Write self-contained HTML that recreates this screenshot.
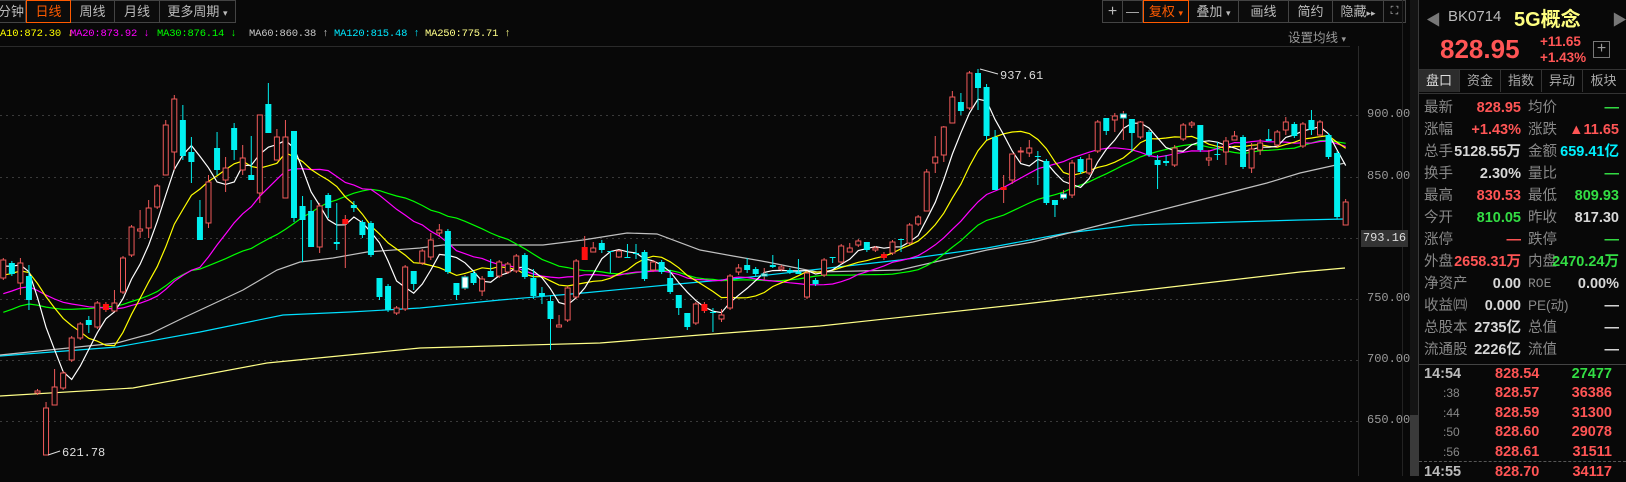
<!DOCTYPE html>
<html><head><meta charset="utf-8">
<style>
*{margin:0;padding:0;box-sizing:border-box}
body{width:1626px;height:476px;background:#080808;overflow:hidden;position:relative;font-family:"Liberation Sans","Noto Sans CJK SC",sans-serif;color:#ccc}
.abs{position:absolute}
.tb{position:absolute;top:0;height:23px;border:1px solid #444;border-left:none;font-size:13px;line-height:21px;text-align:center;color:#bbb;background:#0c0c0c;white-space:nowrap;overflow:hidden}
.leg{position:absolute;top:28px;font-family:"Liberation Mono",monospace;font-size:10.5px;letter-spacing:-0.2px;white-space:nowrap}
.ax{position:absolute;left:1367px;font-family:"Liberation Mono",monospace;font-size:12px;color:#999}
.pr{position:absolute;left:1418px;width:208px;height:22px;font-size:14.5px;line-height:22px}
.pr span{position:absolute}
.l1{left:6px;color:#888}
.v1{right:105px;font-weight:bold}
.l2{left:110px;color:#888}
.v2{right:7px;font-weight:bold}
.tr{position:absolute;left:1418px;width:208px;height:20px;font-size:14.5px;line-height:20px;font-weight:bold}
.tr span{position:absolute}
.red{color:#ff5555}.grn{color:#33dd44}.cy{color:#00f0ff}.wh{color:#d8d8d8}
.tab{position:absolute;top:70px;height:22px;width:41px;font-size:13px;line-height:22px;text-align:center;color:#aaa;border-right:1px solid #333}
</style></head><body>

<!-- left toolbar -->
<div class="tb" style="left:-1px;width:27px;border-left:1px solid #444;text-align:right;padding-right:1px;direction:rtl">分钟</div>
<div class="tb" style="left:26px;width:45px;border:1px solid #ff5a00;color:#ff5a00">日线</div>
<div class="tb" style="left:71px;width:44px">周线</div>
<div class="tb" style="left:115px;width:45px">月线</div>
<div class="tb" style="left:160px;width:76px">更多周期 <span style="font-size:9px">▾</span></div>

<!-- right toolbar -->
<div class="tb" style="left:1102px;width:21px;border-left:1px solid #444;font-size:16px">+</div>
<div class="tb" style="left:1123px;width:20px">—</div>
<div class="tb" style="left:1143px;width:46px;border:1px solid #ff5a00;color:#ff5a00">复权 <span style="font-size:9px">▾</span></div>
<div class="tb" style="left:1189px;width:50px">叠加 <span style="font-size:9px">▾</span></div>
<div class="tb" style="left:1239px;width:50px">画线</div>
<div class="tb" style="left:1289px;width:44px">简约</div>
<div class="tb" style="left:1333px;width:51px">隐藏<span style="font-size:9px">▸▸</span></div>
<div class="tb" style="left:1384px;width:22px;font-size:11px">⛶</div>

<!-- legend -->
<div class="leg" style="left:0;color:#ffff00">A10:872.30 ↓</div>
<div class="leg" style="left:70px;color:#ff00ff">MA20:873.92 ↓</div>
<div class="leg" style="left:157px;color:#00ff00">MA30:876.14 ↓</div>
<div class="leg" style="left:249px;color:#c8c8c8">MA60:860.38 ↑</div>
<div class="leg" style="left:334px;color:#00e8ff">MA120:815.48 ↑</div>
<div class="leg" style="left:425px;color:#ffff88">MA250:775.71 ↑</div>
<div class="abs" style="left:1288px;top:27px;font-size:12.5px;color:#999">设置均线 <span style="font-size:9px">▾</span></div>
<div class="abs" style="left:0;top:46px;width:1350px;height:1px;background:#2a2a2a"></div>
<div class="abs" style="left:1358px;top:46px;width:1px;height:430px;background:#2a2a2a"></div>
<div class="abs" style="left:1402px;top:0;width:1px;height:476px;background:#222"></div>

<svg class="abs" style="left:0;top:0" width="1360" height="476" id="ch"></svg>

<!-- axis -->
<div class="ax" style="top:107px">900.00</div>
<div class="ax" style="top:169px">850.00</div>
<div class="ax" style="top:291px">750.00</div>
<div class="ax" style="top:352px">700.00</div>
<div class="ax" style="top:413px">650.00</div>
<div class="abs" style="left:1361px;top:230px;width:47px;height:17px;background:#333;font-family:'Liberation Mono',monospace;font-size:12px;color:#ddd;line-height:17px;text-align:center">793.16</div>

<!-- scrollbar -->
<div class="abs" style="left:1410px;top:0;width:8px;height:476px;background:#141414"></div>
<div class="abs" style="left:1410px;top:415px;width:8px;height:61px;background:#3a3a3a"></div>

<!-- right panel -->
<div class="abs" style="left:1418px;top:0;width:1px;height:476px;background:#3a3a3a"></div>
<div class="abs" style="left:1426px;top:9px;font-size:15px;color:#777">◀</div>
<div class="abs" style="left:1612px;top:9px;font-size:15px;color:#777">▶</div>
<div class="abs" style="left:1448px;top:8px;font-size:15px;color:#bbb">BK0714</div>
<div class="abs" style="left:1514px;top:3px;font-size:20px;font-weight:bold;color:#ffff80">5G概念</div>
<div class="abs" style="left:1440px;top:34px;font-size:26px;font-weight:bold;color:#ff5555">828.95</div>
<div class="abs" style="left:1540px;top:34px;font-size:13.5px;font-weight:bold;color:#ff5555">+11.65</div>
<div class="abs" style="left:1540px;top:50px;font-size:13.5px;font-weight:bold;color:#ff5555">+1.43%</div>
<div class="abs" style="left:1593px;top:41px;width:17px;height:17px;border:1px solid #777;color:#999;font-size:16px;line-height:14px;text-align:center">+</div>

<div class="abs" style="left:1419px;top:69px;width:207px;height:1px;background:#333"></div>
<div class="tab" style="left:1419px;background:#2c2c2c;color:#ddd">盘口</div>
<div class="tab" style="left:1460px">资金</div>
<div class="tab" style="left:1501px">指数</div>
<div class="tab" style="left:1542px">异动</div>
<div class="tab" style="left:1583px;border:none">板块</div>
<div class="abs" style="left:1419px;top:93px;width:207px;height:1px;background:#333"></div>

<div class="pr" style="top:97px"><span class="l1">最新</span><span class="v1 red">828.95</span><span class="l2">均价</span><span class="v2 grn">—</span></div>
<div class="pr" style="top:119px"><span class="l1">涨幅</span><span class="v1 red">+1.43%</span><span class="l2">涨跌</span><span class="v2 red">▲11.65</span></div>
<div class="pr" style="top:141px"><span class="l1">总手</span><span class="v1 wh">5128.55万</span><span class="l2">金额</span><span class="v2 cy">659.41亿</span></div>
<div class="pr" style="top:163px"><span class="l1">换手</span><span class="v1 wh">2.30%</span><span class="l2">量比</span><span class="v2 grn">—</span></div>
<div class="pr" style="top:185px"><span class="l1">最高</span><span class="v1 red">830.53</span><span class="l2">最低</span><span class="v2 grn">809.93</span></div>
<div class="pr" style="top:207px"><span class="l1">今开</span><span class="v1 grn">810.05</span><span class="l2">昨收</span><span class="v2 wh">817.30</span></div>
<div class="pr" style="top:229px"><span class="l1">涨停</span><span class="v1 red">—</span><span class="l2">跌停</span><span class="v2 grn">—</span></div>
<div class="pr" style="top:251px"><span class="l1">外盘</span><span class="v1 red">2658.31万</span><span class="l2">内盘</span><span class="v2 grn">2470.24万</span></div>
<div class="pr" style="top:273px"><span class="l1">净资产</span><span class="v1 wh">0.00</span><span class="l2" style="font-family:'Liberation Mono',monospace;font-size:13px">ROE</span><span class="v2 wh">0.00%</span></div>
<div class="pr" style="top:295px"><span class="l1">收益㈣</span><span class="v1 wh">0.000</span><span class="l2" style="font-size:13.5px">PE(动)</span><span class="v2 wh">—</span></div>
<div class="pr" style="top:317px"><span class="l1">总股本</span><span class="v1 wh">2735亿</span><span class="l2">总值</span><span class="v2 wh">—</span></div>
<div class="pr" style="top:339px"><span class="l1">流通股</span><span class="v1 wh">2226亿</span><span class="l2">流值</span><span class="v2 wh">—</span></div>
<div class="abs" style="left:1419px;top:364px;width:207px;height:1px;background:#444"></div>

<div class="tr" style="top:364px"><span style="left:6px;color:#bbb">14:54</span><span class="red" style="left:77px">828.54</span><span class="grn" style="right:14px">27477</span></div>
<div class="tr" style="top:383px"><span style="left:25px;color:#888;font-weight:normal;font-size:12px">:38</span><span class="red" style="left:77px">828.57</span><span class="red" style="right:14px">36386</span></div>
<div class="tr" style="top:403px"><span style="left:25px;color:#888;font-weight:normal;font-size:12px">:44</span><span class="red" style="left:77px">828.59</span><span class="red" style="right:14px">31300</span></div>
<div class="tr" style="top:422px"><span style="left:25px;color:#888;font-weight:normal;font-size:12px">:50</span><span class="red" style="left:77px">828.60</span><span class="red" style="right:14px">29078</span></div>
<div class="tr" style="top:442px"><span style="left:25px;color:#888;font-weight:normal;font-size:12px">:56</span><span class="red" style="left:77px">828.61</span><span class="red" style="right:14px">31511</span></div>
<div class="abs" style="left:1419px;top:461px;width:207px;height:0;border-top:1px dashed #555"></div>
<div class="tr" style="top:462px"><span style="left:6px;color:#bbb">14:55</span><span class="red" style="left:77px">828.70</span><span class="red" style="right:14px">34117</span></div>

<script>
var D=[
['R',260,278],['C',263,274],['R',263,283,258,295],['C',276,300,265,310],['R',391,393],['R',408,455,402,455],['R',387,405,369,405],['R',373,388],['R',338,360],['R',324,338],
['C',320,325,316,333],['R',303,327],['F',304,310],['R',303,311,290,311],['R',258,292],['R',227,255],['R',229,231,210,238],['R',208,228,200,238],['R',186,207],['R',125,175,120,175],
['R',99,152,95,170],['C',120,156,105,160],['C',152,162,137,183],['C',217,240,200,240],['R',182,223,175,228],['C',148,170,132,175],['R',168,180,157,192],['C',128,150,123,160],['R',158,170,145,175],['C',175,180,136,180],
['R',115,193,115,203],['C',104,133,83,133],['R',137,160,129,160],['R',137,198,120,198],['C',131,218,131,222],['C',206,220,196,262],['C',211,247,200,247],['R',206,247,203,253],['C',195,208,193,218],['C',242,244,203,250],
['F',219,224,215,268],['C',205,208,201,212],['C',222,235,220,238],['C',223,255],['C',278,297,278,300],['C',286,310],['R',308,313],['R',267,309],['C',271,284,271,290],['R',251,263],
['R',240,257,233,260],['R',230,233,224,236],['C',231,272],['C',283,295,283,300],['W',277,288],['C',273,283],['R',279,291,276,296],['C',271,277,259,277],['R',262,276],['R',264,272],
['R',256,271],['C',255,277],['C',278,296,269,299],['C',293,296,287,304],['C',301,319,295,350],['R',325,327,315,327],['R',288,320],['R',261,297],['F',247,260,236,260],['R',248,252,242,252],
['C',243,250,240,253],['C',251,252,251,273],['R',251,257,250,258],['C',257,258,244,258],['C',253,254,244,259],['C',252,279],['R',262,270],['C',262,272],['C',278,292,270,294],['C',295,308,295,315],
['C',313,327,313,330],['R',304,323],['F',304,311],['C',312,313,308,332],['R',315,319,309,322],['R',276,308],['R',268,272,264,275],['C',265,270,258,273],['C',269,274],['W',274,276,268,280],
['C',265,267,255,268],['R',267,269],['C',270,272],['C',272,274,259,274],['R',273,297],['C',280,284],['R',260,275],['C',257,258,257,263],['R',246,262],['R',248,252,243,252],
['R',241,245],['C',242,250,242,252],['R',248,250],['F',254,258],['R',242,253],['C',239,240,239,252],['R',225,243],['R',217,224],['R',172,211,169,211],['R',157,163,136,173],
['R',127,155,126,162],['R',97,123,91,123],['C',102,111,93,115],['R',73,108],['C',73,88,69,110],['C',87,136,84,140],['C',137,190,130,190],['F',187,190,175,203],['R',154,180,154,184],['R',151,152,147,162],
['R',148,153,140,157],['C',156,157,151,185],['C',161,203],['C',200,205,200,217],['W',194,198,190,200],['R',163,195,160,198],['C',159,172],['R',159,173,154,175],['R',122,151],['C',118,131,118,135],
['R',116,120,113,132],['W',114,118,111,140],['C',119,133,119,152],['R',122,137,121,139],['C',132,155],['C',160,165,155,189],['C',161,163,155,166],['R',148,165,145,167],['R',125,139],['R',123,125,121,128],
['C',125,150,125,152],['R',158,160,150,166],['C',154,155,142,160],['R',141,152,137,165],['R',136,140,131,140],['C',137,167],['R',149,168,143,173],['R',143,150,139,155],['C',139,141,129,141],['R',132,145],
['R',122,130,117,135],['C',124,136],['R',124,146],['C',120,130,110,135],['R',122,135],['C',135,157],['C',153,217],['R',202,225,199,225]
];
var s='',X=function(i){return 3.3+i*8.55};
[115,177,238,299,360,421].forEach(function(y){s+='<line x1="0" x2="1358" y1="'+y+'.5" y2="'+y+'.5" stroke="#3a3a3a" stroke-dasharray="2,4"/>'});
function pl(pts,c){s+='<polyline fill="none" stroke="'+c+'" stroke-width="1.2" points="'+pts.map(function(p){return p[0].toFixed(1)+','+p[1].toFixed(1)}).join(' ')+'"/>'}
pl([[0,396],[133,388],[267,363],[420,348],[600,343],[700,335],[820,326],[1033,303],[1300,272],[1345,268]],'#ffff88');
pl([[0,356],[117,347],[200,332],[283,315],[350,312],[420,308],[500,300],[583,293],[667,285],[733,279],[820,269],[900,260],[987,248],[1067,233],[1133,225],[1200,223],[1300,220],[1345,219]],'#00e0ff');
pl([[0,355],[117,343],[150,334],[183,318],[243,290],[277,270],[300,262],[333,258],[367,252],[420,248],[443,245],[543,245],[583,240],[627,233],[657,234],[700,250],[733,256],[767,262],[817,272],[900,270],[987,250],[1033,242],[1133,217],[1200,200],[1267,183],[1300,173],[1345,163]],'#c0c0c0');
var cl=[];for(var k=0;k<30;k++)cl.push(370-(108*k/29));
D.forEach(function(d){cl.push(d[0]=='C'?d[2]:d[1])});
function ma(n,c){var p=[];for(var i=0;i<D.length;i++){var j=i+30,t=0;for(var m=0;m<n;m++)t+=cl[j-m];p.push([X(i),t/n])}pl(p,c)}
ma(30,'#00ff00');ma(20,'#ff00ff');ma(10,'#ffff00');ma(5,'#ffffff');
D.forEach(function(d,i){var x=X(i),t=d[1],b=d[2],wt=d.length>3?d[3]:t-2,wb=d.length>4?d[4]:b+2;if(b-t<1)b=t+1;
var col=d[0]=='C'?'#00f0f0':'#f05a5a';
s+='<line x1="'+x+'" x2="'+x+'" y1="'+wt+'" y2="'+wb+'" stroke="'+col+'" stroke-width="1"/>';
if(d[0]=='R')s+='<rect x="'+(x-2.5)+'" y="'+t+'" width="5" height="'+(b-t)+'" fill="#080808" stroke="'+col+'" stroke-width="1"/>';
else if(d[0]=='F')s+='<rect x="'+(x-3)+'" y="'+t+'" width="6" height="'+(b-t)+'" fill="#ff1010"/>';
else if(d[0]=='W')s+='<rect x="'+(x-3)+'" y="'+t+'" width="6" height="'+(b-t)+'" fill="#ffffff" stroke="#00c8c8"/>';
else s+='<rect x="'+(x-3)+'" y="'+t+'" width="6" height="'+(b-t)+'" fill="'+col+'"/>';});
s+='<line x1="'+(X(114)+2)+'" y1="69" x2="'+(X(114)+20)+'" y2="74" stroke="#ddd"/><text x="'+(X(114)+22)+'" y="79" fill="#ddd" font-family="Liberation Mono,monospace" font-size="12">937.61</text>';
s+='<line x1="'+(X(5)+2)+'" y1="455" x2="'+(X(5)+14)+'" y2="451" stroke="#ddd"/><text x="'+(X(5)+16)+'" y="456" fill="#ddd" font-family="Liberation Mono,monospace" font-size="12">621.78</text>';
document.getElementById('ch').innerHTML=s;
</script>
</body></html>
